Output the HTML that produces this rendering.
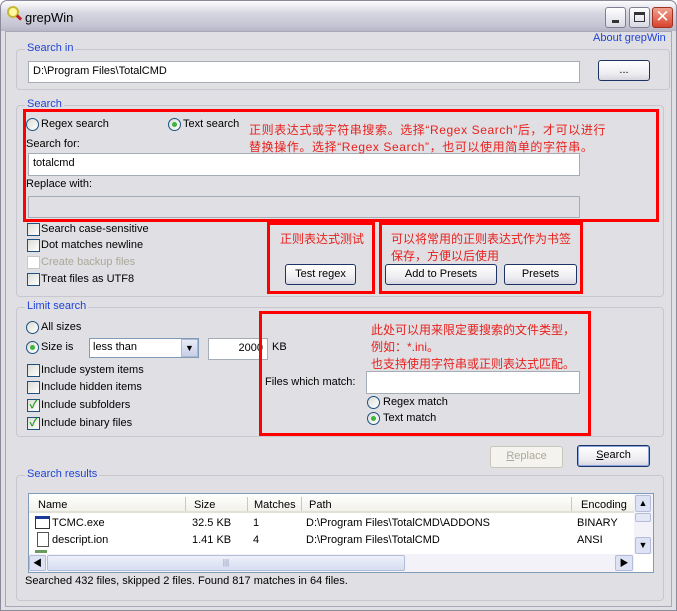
<!DOCTYPE html>
<html><head><meta charset="utf-8"><style>
*{box-sizing:border-box;margin:0;padding:0}
body{width:677px;height:611px;overflow:hidden;background:#fff;font:11px "Liberation Sans","Noto Sans CJK SC",sans-serif;color:#000}
.a{position:absolute;white-space:nowrap}
#win{position:absolute;left:0;top:0;width:677px;height:611px;background:#e0dfe3;border:1px solid #8a8a98;border-radius:7px 7px 0 0}
#title{position:absolute;left:0;top:0;width:675px;height:30px;border-radius:7px 7px 0 0;background:linear-gradient(#fdfdfe,#d7d7e2 40%,#c3c3d2 85%,#b6b6c6)}
.frame{position:absolute;left:4px;top:30px;width:667px;height:576px;border:1px solid #a8a8b8}
.tb{position:absolute;top:6px;width:21px;height:21px;border:1px solid #7f7f93;border-radius:3px;background:linear-gradient(#fff,#d8d8e4)}
.grp{position:absolute;border:1px solid #c8c7cf;border-radius:4px}
.gl{position:absolute;background:#e0dfe3;color:#1f44d8;padding:0 2px;top:-8px;left:8px}
.in{position:absolute;background:#fff;border:1px solid #a5acb5;padding:3px 4px}
.btn{position:absolute;border:1px solid #1d3363;border-radius:3px;background:linear-gradient(#fff,#ecebf0 70%,#d6d5de);text-align:center;line-height:19px}
.red{position:absolute;border:3px solid #f00}
.rt{position:absolute;color:#e8211e;font-size:12px;white-space:nowrap}
.cb{position:absolute;width:13px;height:13px;border:1px solid #1c5180;background:linear-gradient(135deg,#dcdcd6,#fff)}
.rb{position:absolute;width:13px;height:13px;border:1px solid #1c5180;border-radius:50%;background:linear-gradient(135deg,#dcdcd6,#fff)}
.rb.on::after{content:"";position:absolute;left:3px;top:3px;width:5px;height:5px;border-radius:50%;background:#3fb33f}
.chk{color:#21a121;font-size:11px;line-height:11px;text-align:center;font-weight:bold}
</style></head><body>
<div id="win">
<div id="title"></div>
<div class="a" style="left:6px;top:5px;width:12px;height:12px;border:2px solid #c8b830;border-radius:50%;background:#fff8a0"></div>
<div class="a" style="left:15px;top:15px;width:6px;height:3px;background:#c02020;transform:rotate(45deg)"></div>
<div class="a" style="left:24px;top:9px;font-size:13px">grepWin</div>
<div class="tb" style="left:604px"><div class="a" style="left:6px;top:12px;width:7px;height:3px;background:#333"></div></div>
<div class="tb" style="left:628px"><div class="a" style="left:4px;top:4px;width:11px;height:10px;border:1px solid #333;border-top-width:3px"></div></div>
<div class="tb" style="left:651px;background:linear-gradient(#f0a090,#d8442e);border-color:#a03020;color:#fff;font-size:17px;text-align:center;line-height:18px">✕</div>
<div class="frame"></div>
<div class="a" style="left:592px;top:31px;color:#1f44d8">About grepWin</div>

<div class="grp" style="left:15px;top:48px;width:654px;height:41px"><div class="gl">Search in</div></div>
<div class="in" style="left:27px;top:60px;width:552px;height:22px">D:\Program Files\TotalCMD</div>
<div class="btn" style="left:597px;top:59px;width:52px;height:21px">...</div>

<div class="grp" style="left:15px;top:104px;width:648px;height:192px"><div class="gl">Search</div></div>
<div class="rb" style="left:25px;top:117px"></div><div class="a" style="left:40px;top:117px">Regex search</div>
<div class="rb on" style="left:167px;top:117px"></div><div class="a" style="left:182px;top:117px">Text search</div>
<div class="a" style="left:25px;top:137px">Search for:</div>
<div class="in" style="left:27px;top:152px;width:552px;height:23px">totalcmd</div>
<div class="a" style="left:25px;top:177px">Replace with:</div>
<div class="in" style="left:27px;top:195px;width:552px;height:22px;background:#e0dfe3"></div>
<div class="red" style="left:22px;top:108px;width:636px;height:113px"></div>
<div class="rt" style="left:248px;top:120px;letter-spacing:0.6px">正则表达式或字符串搜索。选择“Regex Search”后，才可以进行</div>
<div class="rt" style="left:248px;top:137px;letter-spacing:0.6px">替换操作。选择“Regex Search”，也可以使用简单的字符串。</div>

<div class="cb" style="left:26px;top:222px"></div><div class="a" style="left:40px;top:222px">Search case-sensitive</div>
<div class="cb" style="left:26px;top:238px"></div><div class="a" style="left:40px;top:238px">Dot matches newline</div>
<div class="cb" style="left:26px;top:255px;border-color:#c8c8c0;background:#fff"></div><div class="a" style="left:40px;top:255px;color:#aca899">Create backup files</div>
<div class="cb" style="left:26px;top:272px"></div><div class="a" style="left:40px;top:272px">Treat files as UTF8</div>

<div class="red" style="left:266px;top:221px;width:108px;height:72px"></div>
<div class="rt" style="left:279px;top:229px">正则表达式测试</div>
<div class="btn" style="left:284px;top:263px;width:71px;height:21px">Test regex</div>
<div class="red" style="left:378px;top:221px;width:204px;height:72px"></div>
<div class="rt" style="left:390px;top:229px">可以将常用的正则表达式作为书签</div>
<div class="rt" style="left:390px;top:246px">保存，方便以后使用</div>
<div class="btn" style="left:384px;top:263px;width:112px;height:21px">Add to Presets</div>
<div class="btn" style="left:503px;top:263px;width:73px;height:21px">Presets</div>

<div class="grp" style="left:15px;top:306px;width:648px;height:130px"><div class="gl">Limit search</div></div>
<div class="rb" style="left:25px;top:320px"></div><div class="a" style="left:40px;top:320px">All sizes</div>
<div class="rb on" style="left:25px;top:340px"></div><div class="a" style="left:40px;top:340px">Size is</div>
<div class="in" style="left:88px;top:337px;width:110px;height:20px;border-color:#7f9db9;padding:2px 3px">less than</div>
<div class="a" style="left:180px;top:338px;width:17px;height:18px;border:1px solid #b0b8d0;background:linear-gradient(#e8ecf8,#c8d0e8);text-align:center;font-size:9px;line-height:17px">▼</div>
<div class="in" style="left:207px;top:337px;width:60px;height:22px;text-align:right">2000</div>
<div class="a" style="left:271px;top:340px">KB</div>
<div class="cb" style="left:26px;top:363px"></div><div class="a" style="left:40px;top:363px">Include system items</div>
<div class="cb" style="left:26px;top:380px"></div><div class="a" style="left:40px;top:380px">Include hidden items</div>
<div class="cb chk" style="left:26px;top:398px">✓</div><div class="a" style="left:40px;top:398px">Include subfolders</div>
<div class="cb chk" style="left:26px;top:416px">✓</div><div class="a" style="left:40px;top:416px">Include binary files</div>

<div class="red" style="left:258px;top:310px;width:332px;height:125px"></div>
<div class="rt" style="left:370px;top:320px">此处可以用来限定要搜索的文件类型，</div>
<div class="rt" style="left:370px;top:337px">例如：*.ini。</div>
<div class="rt" style="left:370px;top:354px">也支持使用字符串或正则表达式匹配。</div>
<div class="a" style="left:264px;top:375px">Files which match:</div>
<div class="in" style="left:365px;top:370px;width:214px;height:23px"></div>
<div class="rb" style="left:366px;top:395px"></div><div class="a" style="left:382px;top:395px">Regex match</div>
<div class="rb on" style="left:366px;top:411px"></div><div class="a" style="left:382px;top:411px">Text match</div>

<div class="btn" style="left:489px;top:445px;width:73px;height:22px;border-color:#c9c7ba;background:#f4f3ee;color:#aca899"><u>R</u>eplace</div>
<div class="btn" style="left:576px;top:444px;width:73px;height:22px;box-shadow:inset 0 0 0 1px #8aa5e0"><u>S</u>earch</div>

<div class="grp" style="left:15px;top:474px;width:648px;height:126px"><div class="gl">Search results</div></div>
<div class="a" style="left:27px;top:492px;width:626px;height:80px;background:#fff;border:1px solid #7f9db9"></div>
<div class="a" style="left:28px;top:493px;width:605px;height:19px;background:linear-gradient(#fff,#f2f1ea);border-bottom:2px solid #e2e1d8"></div>
<div class="a" style="left:37px;top:498px">Name</div>
<div class="a" style="left:184px;top:496px;width:1px;height:14px;background:#c8c7c0"></div>
<div class="a" style="left:193px;top:498px">Size</div>
<div class="a" style="left:246px;top:496px;width:1px;height:14px;background:#c8c7c0"></div>
<div class="a" style="left:253px;top:498px">Matches</div>
<div class="a" style="left:300px;top:496px;width:1px;height:14px;background:#c8c7c0"></div>
<div class="a" style="left:308px;top:498px">Path</div>
<div class="a" style="left:570px;top:496px;width:1px;height:14px;background:#c8c7c0"></div>
<div class="a" style="left:580px;top:498px">Encoding</div>
<div class="a" style="left:34px;top:515px;width:15px;height:13px;border:1px solid #333;border-top:3px solid #1a3a9a"></div>
<div class="a" style="left:51px;top:516px">TCMC.exe</div><div class="a" style="left:191px;top:516px">32.5 KB</div><div class="a" style="left:252px;top:516px">1</div><div class="a" style="left:305px;top:516px">D:\Program Files\TotalCMD\ADDONS</div><div class="a" style="left:576px;top:516px">BINARY</div>
<div class="a" style="left:36px;top:531px;width:12px;height:15px;border:1px solid #555;background:#fff"></div>
<div class="a" style="left:51px;top:533px">descript.ion</div><div class="a" style="left:191px;top:533px">1.41 KB</div><div class="a" style="left:252px;top:533px">4</div><div class="a" style="left:305px;top:533px">D:\Program Files\TotalCMD</div><div class="a" style="left:576px;top:533px">ANSI</div>
<div class="a" style="left:34px;top:549px;width:12px;height:3px;background:#6a9a60"></div>
<div class="a" style="left:633px;top:493px;width:19px;height:60px;background:#f3f2f8"></div>
<div class="a" style="left:634px;top:494px;width:16px;height:17px;border:1px solid #b4bcd8;border-radius:2px;background:#dde3f4;text-align:center;font-size:9px;line-height:15px">▲</div>
<div class="a" style="left:634px;top:512px;width:16px;height:9px;border:1px solid #b4bcd8;border-radius:2px;background:#e4e8f6"></div>
<div class="a" style="left:634px;top:536px;width:16px;height:17px;border:1px solid #b4bcd8;border-radius:2px;background:#dde3f4;text-align:center;font-size:9px;line-height:15px">▼</div>
<div class="a" style="left:28px;top:553px;width:605px;height:18px;background:#f3f2f8"></div>
<div class="a" style="left:28px;top:554px;width:17px;height:16px;border:1px solid #b4bcd8;border-radius:2px;background:#dde3f4;text-align:center;font-size:9px;line-height:14px">◀</div>
<div class="a" style="left:46px;top:554px;width:358px;height:16px;border:1px solid #b4bcd8;border-radius:2px;background:linear-gradient(#eef1fb,#d6ddf2);text-align:center;font-size:8px;line-height:14px;color:#8890b0">|||</div>
<div class="a" style="left:614px;top:554px;width:18px;height:16px;border:1px solid #b4bcd8;border-radius:2px;background:#dde3f4;text-align:center;font-size:9px;line-height:14px">▶</div>
<div class="a" style="left:24px;top:574px">Searched 432 files, skipped 2 files. Found 817 matches in 64 files.</div>
</div>
</body></html>
